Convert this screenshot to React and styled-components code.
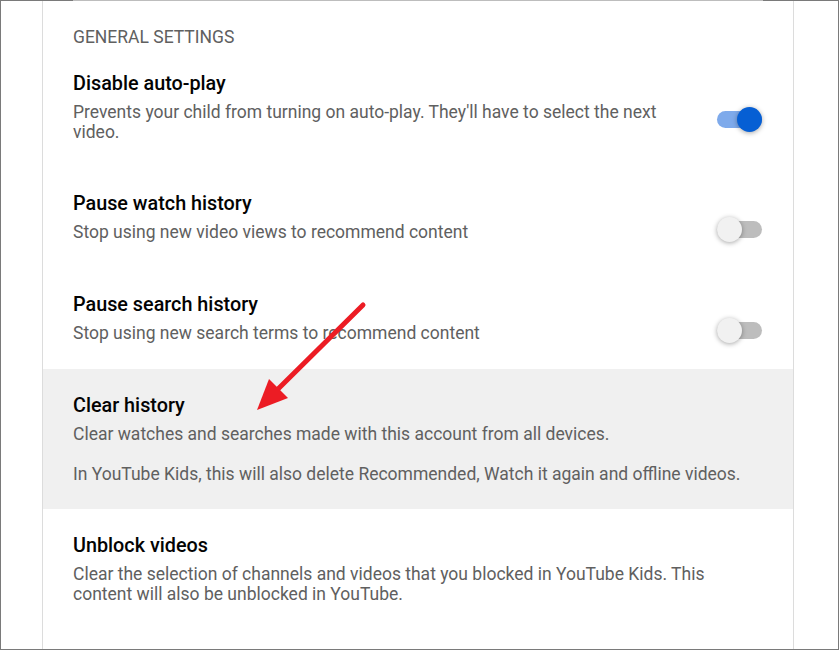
import React from 'react'
import styled, { createGlobalStyle } from 'styled-components'

const GlobalStyle = createGlobalStyle`
  html, body {
    margin: 0;
    padding: 0;
    background: #fff;
  }
  body {
    font-family: Roboto, "Noto Sans", Arial, sans-serif;
    -webkit-font-smoothing: antialiased;
  }
`

const settings = [
  {
    title: 'Disable auto-play',
    text: ["Prevents your child from turning on auto-play. They'll have to select the next video."],
    toggle: true,
    on: true,
  },
  {
    title: 'Pause watch history',
    text: ['Stop using new video views to recommend content'],
    toggle: true,
  },
  {
    title: 'Pause search history',
    text: ['Stop using new search terms to recommend content'],
    toggle: true,
  },
  {
    title: 'Clear history',
    text: [
      'Clear watches and searches made with this account from all devices.',
      'In YouTube Kids, this will also delete Recommended, Watch it again and offline videos.',
    ],
    hovered: true,
  },
  {
    title: 'Unblock videos',
    text: ['Clear the selection of channels and videos that you blocked in YouTube Kids. This content will also be unblocked in YouTube.'],
  },
]

function App() {
  return (
    <>
      <GlobalStyle />
      <Frame>
        <TopEdge>
          <span />
        </TopEdge>
        <Panel>
          <SectionTitle>General settings</SectionTitle>
          {settings.map((s) => (
            <Row key={s.title} $hovered={s.hovered} $single={s.text.length === 1 && !s.on}>
              <Copy>
                <Title>{s.title}</Title>
                {s.text.map((t) => (
                  <Desc key={t}>{t}</Desc>
                ))}
              </Copy>
              {s.toggle && (
                <Toggle $on={s.on} role="switch" aria-checked={!!s.on}>
                  <Knob $on={s.on} />
                </Toggle>
              )}
            </Row>
          ))}
        </Panel>
        <Arrow width="140" height="130" viewBox="0 0 140 130">
          <line x1="123" y1="15" x2="36" y2="101" stroke="#ec1c24" strokeWidth="5" strokeLinecap="round" />
          <polygon points="17,120 29,89 48,108" fill="#ec1c24" />
        </Arrow>
      </Frame>
    </>
  )
}

export default App

const Frame = styled.div`
  position: relative;
  box-sizing: border-box;
  width: 839px;
  height: 650px;
  border: 1px solid #7a7a7a;
  border-top: none;
  padding: 0 44px 0 41px;
  display: flex;
  flex-direction: column;
  overflow: hidden;
`

const TopEdge = styled.div`
  display: flex;
  height: 1px;
  margin: 0 -44px 0 -42px;
  background: #7a7a7a;
  span {
    flex: 1;
    margin: 0 75px 0 73px;
    background: #bdbdbd;
  }
`

const Panel = styled.div`
  flex: 1;
  border-left: 1px solid #dcdcdc;
  border-right: 1px solid #dcdcdc;
  background: #fff;
`

const SectionTitle = styled.div`
  padding: 26px 30px 0;
  font-size: 17.5px;
  line-height: 20px;
  color: #606060;
  text-transform: uppercase;
`

const Row = styled.div`
  display: flex;
  align-items: center;
  gap: 24px;
  padding: 25px 31px ${(p) => (p.$single ? '26px' : '25px')} 30px;
  background: ${(p) => (p.$hovered ? '#f0f0f0' : 'transparent')};
`

const Copy = styled.div`
  flex: 1;
  min-width: 0;
`

const Title = styled.div`
  font-size: 19.8px;
  font-weight: 500;
  line-height: 24px;
  color: #030303;
  margin-bottom: 6px;
`

const Desc = styled.p`
  margin: 0;
  font-size: 17.5px;
  line-height: 20px;
  color: #606060;
  & + & {
    margin-top: 20px;
  }
`

const Toggle = styled.div`
  position: relative;
  flex: none;
  width: 45px;
  height: 25px;
  margin-top: 25px;
  &::before {
    content: '';
    position: absolute;
    left: 0;
    top: 4px;
    width: 45px;
    height: 17px;
    border-radius: 9px;
    background: ${(p) => (p.$on ? '#7eaaeb' : '#bdbdbd')};
  }
`

const Knob = styled.span`
  position: absolute;
  top: 0;
  left: ${(p) => (p.$on ? '20px' : '0')};
  width: 25px;
  height: 25px;
  border-radius: 50%;
  background: ${(p) => (p.$on ? '#065fd4' : '#f1f1f1')};
  box-shadow: 0 1px 5px rgba(0, 0, 0, 0.35);
`

const Arrow = styled.svg`
  position: absolute;
  left: 239px;
  top: 290px;
`
